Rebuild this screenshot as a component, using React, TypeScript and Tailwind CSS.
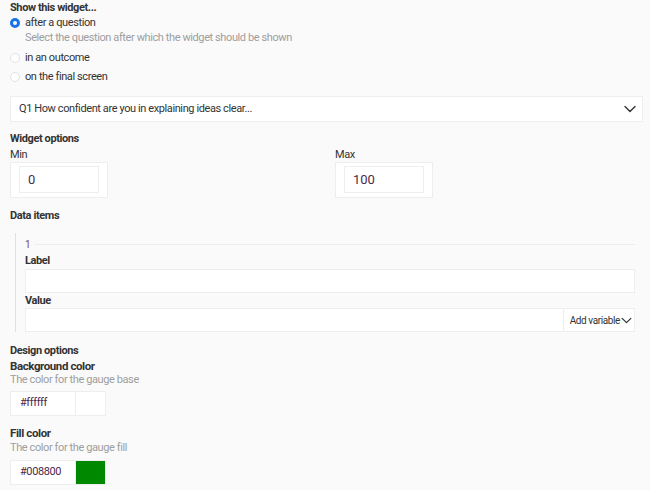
import React from "react";

function Radio({ checked, label }: { checked?: boolean; label: string }) {
  return (
    <div className="flex items-center gap-[5px] h-full">
      {checked ? (
        <span className="shrink-0 w-[10px] h-[10px] rounded-full border-[3px] border-[#1a73e8] bg-white" />
      ) : (
        <span className="shrink-0 w-[10px] h-[10px] rounded-full border border-[#e2e2e2] bg-white" />
      )}
      <span>{label}</span>
    </div>
  );
}

function Chevron({ className }: { className?: string }) {
  return (
    <svg className={className} viewBox="0 0 12 8" fill="none" stroke="#333" strokeWidth="1.4" strokeLinecap="round" strokeLinejoin="round">
      <path d="M1 1.5l5 5 5-5" />
    </svg>
  );
}

function NumberBox({ value }: { value: string }) {
  return (
    <div className="w-[98px] h-[36px] border border-[#eeeeee] bg-white px-[8px] pt-[3px]">
      <div className="w-[80px] h-[27px] border border-[#eeeeee] bg-white flex items-center pl-[8px] text-[13px] tracking-normal text-[#4b2a4b]">
        {value}
      </div>
    </div>
  );
}

function ColorInput({ value, swatch }: { value: string; swatch: string }) {
  return (
    <div className="flex w-[96px] h-[25px] border border-[#eeeeee] bg-white">
      <div className="w-[65px] flex items-center pl-[9px] text-[11px] text-[#4b2a4b] border-r border-[#eeeeee]">{value}</div>
      <div className="flex-1" style={{ backgroundColor: swatch }} />
    </div>
  );
}

export default function App() {
  return (
    <div className="w-[650px] h-[490px] bg-[#fafafa] pl-[10px] pr-[7px] text-[11px] tracking-[-0.4px] text-[#333] overflow-hidden" style={{ fontFamily: "Roboto, 'Liberation Sans', sans-serif" }}>
      <div className="h-4 leading-4 font-bold">Show this widget...</div>
      <div className="h-[14px] leading-[14px]">
        <Radio checked label="after a question" />
      </div>
      <div className="h-4 leading-4 pl-[15px] text-[#9e9e9e]">Select the question after which the widget should be shown</div>
      <div className="h-4 leading-4 mt-1">
        <Radio label="in an outcome" />
      </div>
      <div className="h-4 leading-4 mt-[3px]">
        <Radio label="on the final screen" />
      </div>

      <div className="mt-[11px] h-[26px] border border-[#eeeeee] bg-white flex items-center justify-between pl-[8px] pr-[6px]">
        <span>Q1 How confident are you in explaining ideas clear...</span>
        <Chevron className="w-[12px] h-[8px]" />
      </div>

      <div className="mt-[9px] h-4 leading-4 font-bold">Widget options</div>
      <div className="flex">
        <div className="w-[325px]">
          <div className="h-[15px] leading-[16px]">Min</div>
          <NumberBox value="0" />
        </div>
        <div>
          <div className="h-[15px] leading-[16px]">Max</div>
          <NumberBox value="100" />
        </div>
      </div>

      <div className="mt-[10px] h-4 leading-4 font-bold">Data items</div>
      <div className="mt-[9px] ml-[5px] border-l border-[#e0e0e0] pl-[9px] pr-[8px]">
        <div className="pt-[3px] h-[19px] flex items-center gap-[5px]">
          <span className="text-[10px] text-[#7a4a6e]">1</span>
          <div className="flex-1 h-px bg-[#eeeeee]" />
        </div>
        <div className="h-[17px] leading-[18px] font-bold">Label</div>
        <div className="h-[24px] border border-[#eeeeee] bg-white" />
        <div className="h-[15px] leading-[15px] font-bold">Value</div>
        <div className="h-[24px] border border-[#eeeeee] bg-white flex justify-end">
          <div className="border-l border-[#eeeeee] flex items-center gap-[1px] pl-[6px] pr-[2px] text-[10px] text-[#333]">
            <span>Add variable</span>
            <Chevron className="w-[11px] h-[7px]" />
          </div>
        </div>
      </div>

      <div className="mt-[11px] h-4 leading-4 font-bold">Design options</div>
      <div className="h-[14px] leading-[14px] font-bold text-[11.5px]">Background color</div>
      <div className="h-[14px] leading-[14px] text-[#9e9e9e]">The color for the gauge base</div>
      <div className="mt-[4px]">
        <ColorInput value="#ffffff" swatch="#ffffff" />
      </div>

      <div className="mt-[9px] h-4 leading-4 font-bold text-[11.5px]">Fill color</div>
      <div className="h-[14px] leading-[14px] text-[#9e9e9e]">The color for the gauge fill</div>
      <div className="mt-[5px]">
        <ColorInput value="#008800" swatch="#008800" />
      </div>
    </div>
  );
}
